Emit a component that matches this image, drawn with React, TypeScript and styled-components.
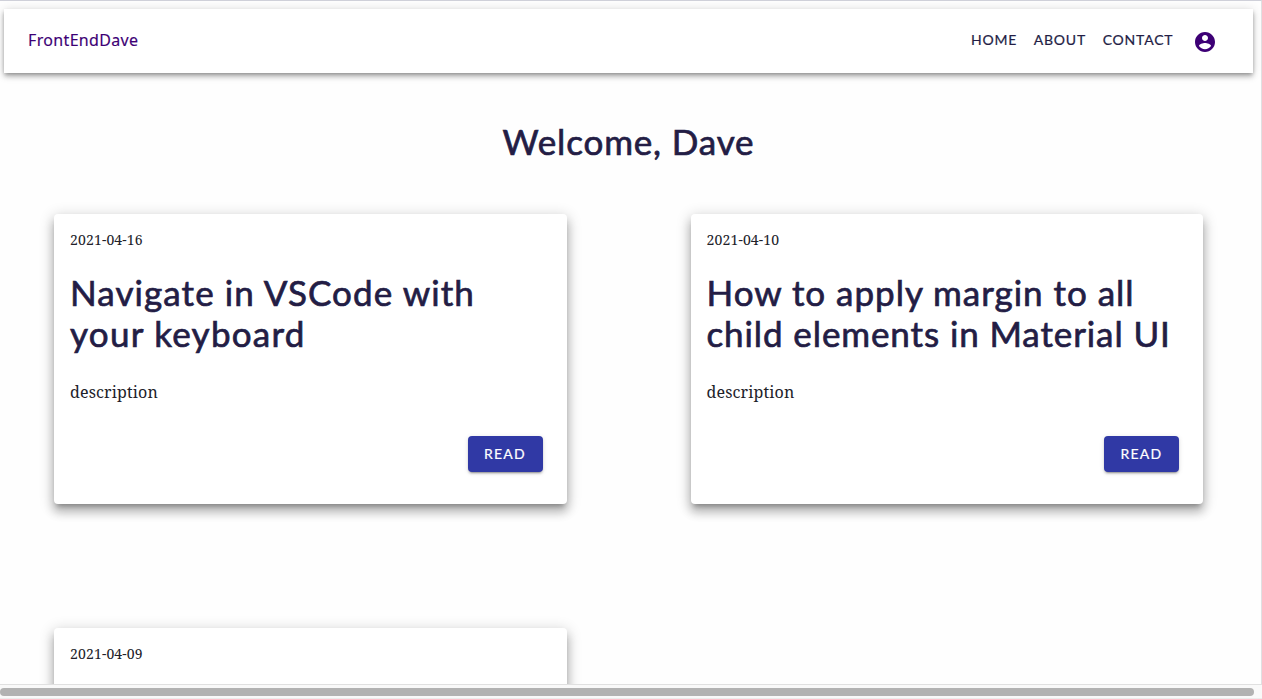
import React from "react";
import styled, { createGlobalStyle } from "styled-components";

const GlobalStyle = createGlobalStyle`
  *, *::before, *::after { box-sizing: border-box; }
  body { margin: 0; background: #fff; overflow: hidden; }
`;

const display = `"Lato", "Noto Sans", sans-serif`;
const serif = `"Noto Serif", "DejaVu Serif Condensed", serif`;

const Window = styled.div`
  display: flex;
  flex-direction: column;
  width: 1262px;
  height: 699px;
  overflow: hidden;
  background: #fefefe;
`;

const Viewport = styled.div`
  flex: 1;
  min-height: 0;
  overflow: hidden;
  border-top: 1px solid #cfd0d9;
  border-right: 1px solid #e0e0e2;
`;

const AppBar = styled.header`
  display: flex;
  align-items: center;
  justify-content: space-between;
  height: 64px;
  margin: 8px 8px 0 4px;
  padding: 0 36px 0 24px;
  background: #fff;
  box-shadow: 0 2px 4px -1px rgba(0, 0, 0, 0.3), 0 4px 5px 0 rgba(0, 0, 0, 0.17),
    0 1px 10px 0 rgba(0, 0, 0, 0.15);
`;

const Brand = styled.a`
  margin-bottom: 2px;
  font: 400 16px/24px "Noto Sans", sans-serif;
  letter-spacing: 0.34px;
  color: #3d0075;
  -webkit-text-stroke: 0.15px #3d0075;
`;

const Nav = styled.nav`
  display: flex;
  align-items: center;
`;

const NavLink = styled.a`
  margin: 0 16.6px 2px 0;
  font: 400 14px/24px ${display};
  letter-spacing: 0.8px;
  color: #231d45;
  -webkit-text-stroke: 0.2px #231d45;
`;

const Avatar = styled.svg`
  width: 24px;
  height: 24px;
  margin: 2px 0 0 3px;
  fill: #3d0075;
`;

const Heading = styled.h1`
  margin: 0;
  font: 400 35px/41px ${display};
  letter-spacing: 0.86px;
  color: #231d45;
  -webkit-text-stroke: 0.7px #231d45;
`;

const Welcome = styled(Heading)`
  margin-top: 48px;
  padding-right: 4px;
  text-align: center;
`;

const Posts = styled.main`
  display: grid;
  grid-template-columns: 512.5px 512.5px;
  gap: 124px;
  margin: 52px 0 0 54px;
`;

const Card = styled.article`
  display: flex;
  flex-direction: column;
  height: 290px;
  padding: 16px;
  border-radius: 4px;
  background: #fff;
  color: #212129;
  box-shadow: 0 5px 5px -3px rgba(0, 0, 0, 0.28), 0 8px 10px 1px rgba(0, 0, 0, 0.19),
    0 3px 14px 2px rgba(0, 0, 0, 0.16);
`;

const PostDate = styled.time`
  font: 400 14px/20px ${serif};
  letter-spacing: 0.15px;
`;

const Title = styled(Heading).attrs({ as: "h2" })`
  margin: 22px 0 26px;
`;

const TitleLine = styled.span<{ $tracking: number }>`
  display: block;
  white-space: nowrap;
  letter-spacing: ${(p) => p.$tracking}px;
`;

const Description = styled.p`
  margin: 0;
  font: 400 16px/24px ${serif};
  letter-spacing: 0.15px;
`;

const ReadButton = styled.button`
  align-self: flex-end;
  width: 75px;
  height: 36px;
  margin: 32px 8px 0 0;
  padding: 0;
  border: 0;
  border-radius: 4px;
  background: #3039a5;
  color: #fff;
  font: 400 14px/24px ${display};
  letter-spacing: 1.2px;
  -webkit-text-stroke: 0.2px #fff;
  box-shadow: 0 3px 1px -2px rgba(0, 0, 0, 0.2), 0 2px 2px 0 rgba(0, 0, 0, 0.14),
    0 1px 5px 0 rgba(0, 0, 0, 0.12);
`;

const ScrollTrack = styled.div`
  height: 15px;
  padding: 3px 8px 2px 0;
  border-top: 1px solid #e0e0e0;
  border-bottom: 1px solid #ececec;
  background: #f9f9f9;
`;

const ScrollThumb = styled.div`
  height: 8px;
  border-radius: 4px;
  background: #b2b2b2;
`;

const links = ["HOME", "ABOUT", "CONTACT"];

interface Post {
  date: string;
  title?: { text: string; tracking: number }[];
  description?: string;
}

const posts: Post[] = [
  {
    date: "2021-04-16",
    title: [
      { text: "Navigate in VSCode with", tracking: 1.09 },
      { text: "your keyboard", tracking: 1.27 },
    ],
    description: "description",
  },
  {
    date: "2021-04-10",
    title: [
      { text: "How to apply margin to all", tracking: 0.98 },
      { text: "child elements in Material UI", tracking: 0.9 },
    ],
    description: "description",
  },
  { date: "2021-04-09" },
];

export default function App() {
  return (
    <Window>
      <GlobalStyle />
      <Viewport>
        <AppBar>
          <Brand>FrontEndDave</Brand>
          <Nav>
            {links.map((link) => (
              <NavLink key={link}>{link}</NavLink>
            ))}
            <Avatar viewBox="0 0 24 24">
              <path d="M12 2C6.48 2 2 6.48 2 12s4.48 10 10 10 10-4.48 10-10S17.52 2 12 2zm0 3c1.66 0 3 1.34 3 3s-1.34 3-3 3-3-1.34-3-3 1.34-3 3-3zm0 14.2c-2.5 0-4.71-1.28-6-3.22.03-1.99 4-3.08 6-3.08 1.99 0 5.97 1.09 6 3.08-1.29 1.94-3.5 3.22-6 3.22z" />
            </Avatar>
          </Nav>
        </AppBar>
        <Welcome>Welcome, Dave</Welcome>
        <Posts>
          {posts.map((post) => (
            <Card key={post.date}>
              <PostDate>{post.date}</PostDate>
              {post.title && (
                <>
                  <Title>
                    {post.title.map((line) => (
                      <TitleLine key={line.text} $tracking={line.tracking}>
                        {line.text}
                      </TitleLine>
                    ))}
                  </Title>
                  <Description>{post.description}</Description>
                  <ReadButton>READ</ReadButton>
                </>
              )}
            </Card>
          ))}
        </Posts>
      </Viewport>
      <ScrollTrack>
        <ScrollThumb />
      </ScrollTrack>
    </Window>
  );
}
